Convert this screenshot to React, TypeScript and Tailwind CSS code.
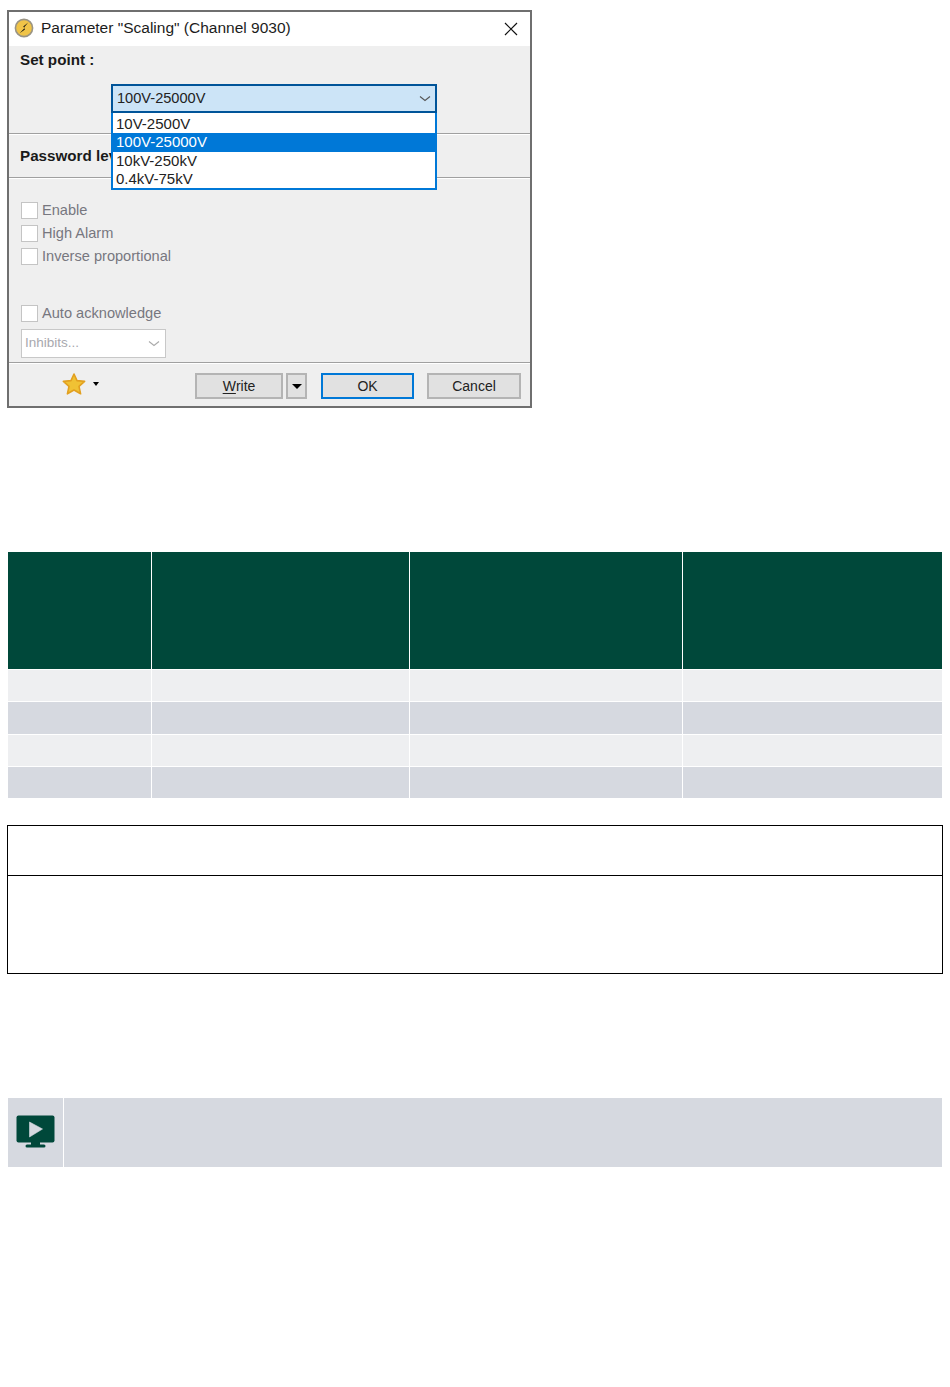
import React from 'react';

const rows = ['bg-[#eeeff1]', 'bg-[#d6d9e0]', 'bg-[#eeeff1]', 'bg-[#d6d9e0]'];
const rowHeights = ['h-[31px]', 'h-[32px]', 'h-[31px]', 'h-[31px]'];
const cols = ['w-[143px]', 'w-[257px]', 'w-[272px]', 'flex-1'];

function Check({ label, className }: { label: string; className: string }) {
  return (
    <div className={`flex items-center gap-[4px] ${className}`}>
      <span className="w-[17px] h-[17px] bg-white border border-[#c4c4c4]" />
      <span className="text-[14.6px] leading-[17px] text-[#77777f]">{label}</span>
    </div>
  );
}

function Chevron({ color }: { color: string }) {
  return (
    <svg width="12" height="7" viewBox="0 0 12 7" fill="none">
      <path d="M1 1.5 L6 5.5 L11 1.5" stroke={color} strokeWidth="1.1" />
    </svg>
  );
}

function Star() {
  return (
    <svg width="24" height="22" viewBox="0 0 24 22" className="mb-[3px]">
      <path
        d="M12 1 L15 7.6 L22.6 8.4 L17 13.4 L18.6 20.8 L12 17 L5.4 20.8 L7 13.4 L1.4 8.4 L9 7.6 Z"
        fill="#f0c234"
        stroke="#e2a020"
        strokeWidth="1.6"
        strokeLinejoin="round"
      />
    </svg>
  );
}

function AppIcon() {
  return (
    <svg width="20" height="20" viewBox="0 0 20 20" className="mb-[2px]">
      <circle cx="10" cy="10" r="8.6" fill="#f0c448" stroke="#9a9484" strokeWidth="1.6" />
      <path d="M14.2 4.6 L9.2 8.6 L10.6 10 L5.6 15.2 L11 11.4 L9.8 9.8 Z" fill="#161616" />
    </svg>
  );
}

function Monitor() {
  return (
    <svg width="40" height="34" viewBox="0 0 40 34">
      <rect x="0.5" y="1.5" width="38" height="27" rx="2" fill="#00483a" />
      <path d="M13.5 8 L26.5 15 L13.5 23 Z" fill="#d6d9e0" stroke="#d6d9e0" strokeWidth="0.6" strokeLinejoin="round" />
      <rect x="15" y="28" width="9" height="3" fill="#00483a" />
      <rect x="9.5" y="30.5" width="20" height="3" rx="1.5" fill="#00483a" />
    </svg>
  );
}

function Button({ children, className }: { children: React.ReactNode; className: string }) {
  return (
    <div className={`h-[26px] pt-[1px] flex items-center justify-center bg-[#e1e1e1] text-[14px] text-[#222] ${className}`}>
      {children}
    </div>
  );
}

export default function App() {
  return (
    <div className="w-[950px] h-[1387px] bg-white overflow-hidden font-['Liberation_Sans',sans-serif]">
      <div className="pt-[10px] pl-[7px]">
        <div className="relative w-[525px] h-[398px] border-2 border-[#6f6f6f] bg-[#efefef]">
          <div className="h-[34px] bg-white flex items-center pl-[5px] pr-[12px]">
            <AppIcon />
            <span className="ml-[7px] mb-[3px] text-[15.5px] leading-[20px] text-[#1c1c1c] flex-1">
              Parameter "Scaling" (Channel 9030)
            </span>
            <svg width="14" height="14" viewBox="0 0 14 14" fill="none">
              <path d="M1 1 L13 13 M13 1 L1 13" stroke="#111" strokeWidth="1.2" />
            </svg>
          </div>

          <div className="h-[88px] border-b border-[#a0a0a0] px-[11px] pt-[5px]">
            <div className="text-[15.2px] leading-[18px] font-bold text-[#1a1a1a]">Set point :</div>
            <div className="mt-[15px] ml-[91px] w-[326px] h-[29px] bg-[#cce4f7] border-2 border-[#005499] flex items-center justify-between pl-[4px] pr-[4px]">
              <span className="text-[14.6px] text-[#222]">100V-25000V</span>
              <Chevron color="#555" />
            </div>
          </div>

          <div className="h-[44px] border-t border-white border-b border-b-[#a0a0a0] flex items-center pl-[11px] pt-[1px]">
            <span className="text-[15.2px] font-bold text-[#1a1a1a]">Password level</span>
          </div>

          <div className="h-[185px] border-t border-white px-[12px] pt-[23px] border-b border-b-[#a0a0a0]">
            <Check label="Enable" className="mb-[6px]" />
            <Check label="High Alarm" className="mb-[6px]" />
            <Check label="Inverse proportional" className="mb-[40px]" />
            <Check label="Auto acknowledge" className="mb-[7px]" />
            <div className="w-[145px] h-[29px] bg-white border border-[#c8c8c8] flex items-center justify-between pl-[3px] pr-[5px]">
              <span className="text-[13.5px] text-[#a8a8ae]">Inhibits...</span>
              <Chevron color="#aaa" />
            </div>
          </div>

          <div className="h-[43px] border-t border-white flex items-center pl-[53px] pt-[1px]">
            <Star />
            <span className="ml-[7px] mb-[3px] w-0 h-0 border-x-[3px] border-x-transparent border-t-[4px] border-t-black" />
            <Button className="ml-[96px] w-[88px] border-2 border-[#b4b4b4]">
              <span className="underline underline-offset-2">W</span>rite
            </Button>
            <Button className="ml-[3px] w-[21px] border-2 border-[#b4b4b4]">
              <span className="w-0 h-0 border-x-[5px] border-x-transparent border-t-[5px] border-t-black" />
            </Button>
            <Button className="ml-[14px] w-[93px] border-2 border-[#0078d7]">OK</Button>
            <Button className="ml-[13px] w-[94px] border-2 border-[#b4b4b4]">Cancel</Button>
          </div>

          <div className="absolute left-[102px] top-[101px] w-[326px] h-[77px] bg-white border-2 border-t-0 border-[#0078d7] flex flex-col text-[15px] leading-[17px] text-[#222] pt-[1px]">
            <div className="pl-[3px] h-[19px] pt-[1px]">10V-2500V</div>
            <div className="pl-[5px] h-[19px] bg-[#0078d7] text-white -mx-[2px]">100V-25000V</div>
            <div className="pl-[3px] h-[19px]">10kV-250kV</div>
            <div className="pl-[3px] h-[18px]">0.4kV-75kV</div>
          </div>
        </div>
      </div>

      <div className="mt-[144px] ml-[8px] w-[934px]">
        <div className="flex h-[117px] gap-px">
          {cols.map((c) => (
            <div key={c} className={`${c} bg-[#00483a]`} />
          ))}
        </div>
        {rows.map((bg, i) => (
          <div key={i} className={`flex gap-px mt-px ${rowHeights[i]}`}>
            {cols.map((c) => (
              <div key={c} className={`${c} ${bg}`} />
            ))}
          </div>
        ))}
      </div>

      <div className="mt-[27px] ml-[7px] w-[936px] h-[149px] border border-black">
        <div className="h-[50px] border-b border-black" />
      </div>

      <div className="mt-[124px] ml-[8px] w-[934px] h-[69px] flex gap-px">
        <div className="w-[55px] bg-[#d6d9e0] flex items-center justify-center pb-[4px]">
          <Monitor />
        </div>
        <div className="flex-1 bg-[#d6d9e0]" />
      </div>
    </div>
  );
}
